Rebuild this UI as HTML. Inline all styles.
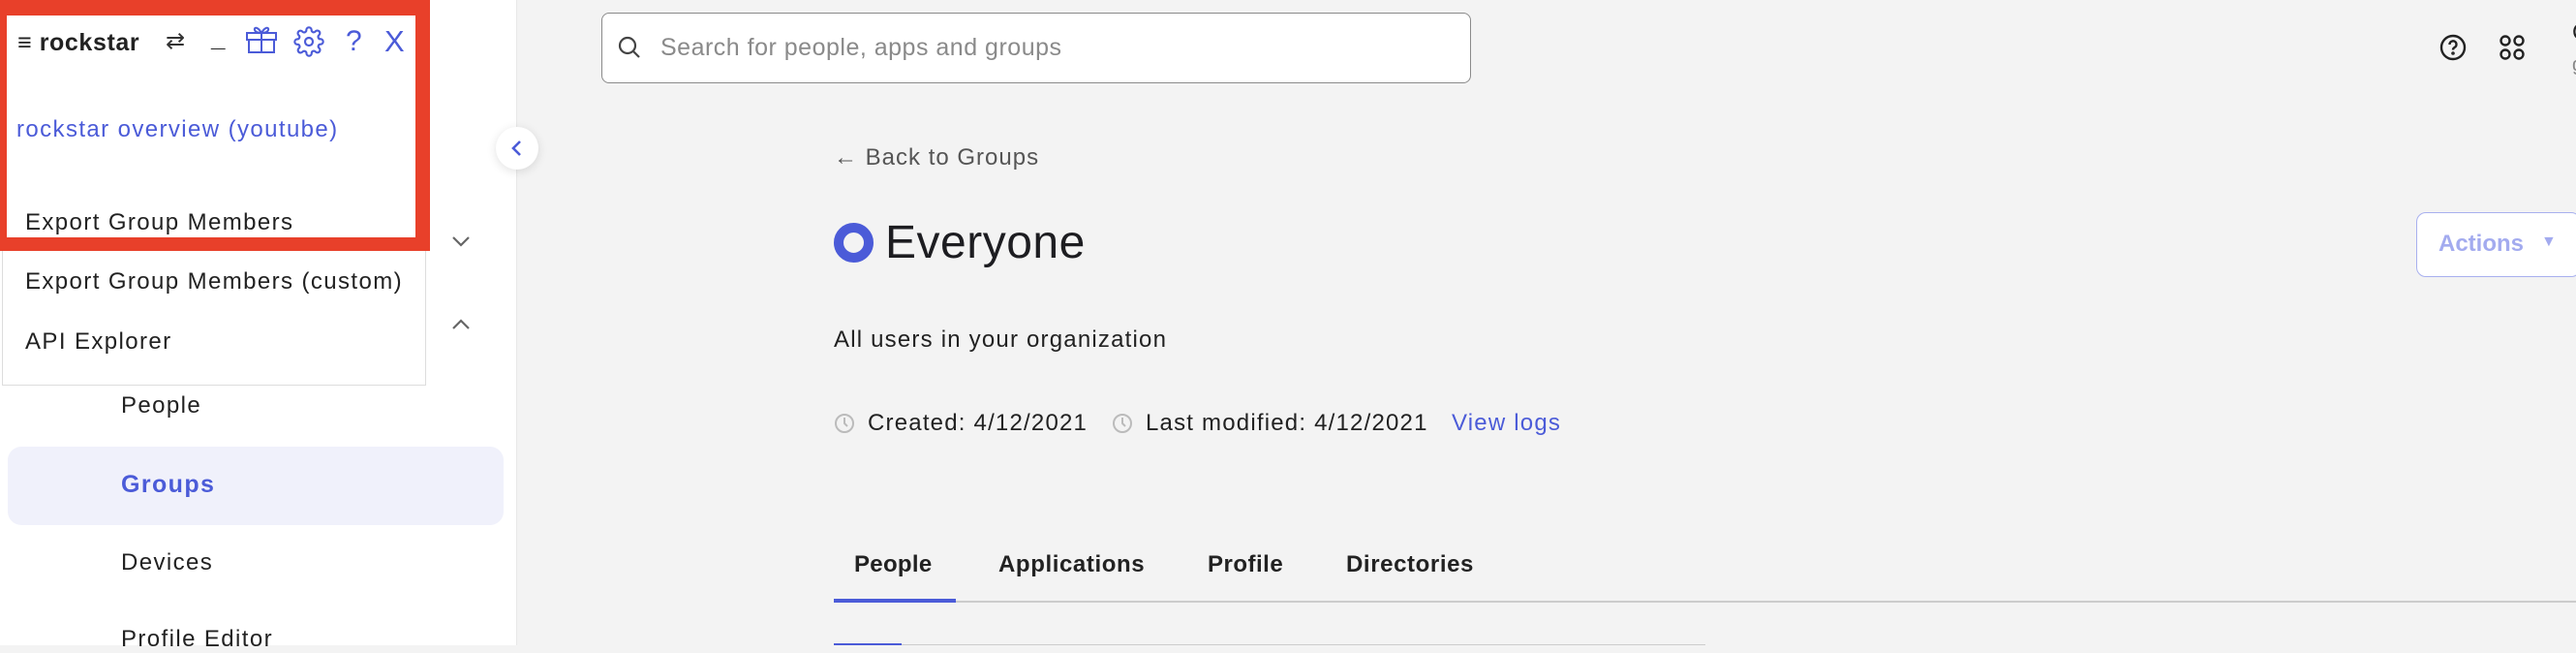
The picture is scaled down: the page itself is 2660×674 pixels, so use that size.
<!DOCTYPE html>
<html><head><meta charset="utf-8"><style>
*{margin:0;padding:0;box-sizing:border-box}
body{width:2660px;height:666px;overflow:hidden;background:#f3f3f3;font-family:"Liberation Sans",sans-serif;position:relative;color:#1d1d21}
.a{position:absolute;white-space:nowrap}
.side{position:absolute;left:0;top:0;width:534px;height:666px;background:#fff;border-right:1px solid #e8e8e8}
.blue{color:#4b5bd8}
.s{letter-spacing:1.4px}
.m{letter-spacing:1.2px}
</style></head><body>
<div class="side"></div>
<div class="a" style="left:2px;top:250px;width:438px;height:148px;background:#fff;border:1px solid #ddd;border-top:none"></div>
<div class="a s" style="left:26px;top:277px;font-size:24px;color:#222">Export Group Members (custom)</div>
<div class="a s" style="left:26px;top:339px;font-size:24px;color:#222">API Explorer</div>
<div class="a" style="left:0;top:0;width:444px;height:259px;border-style:solid;border-color:#e8402a;border-width:16px 15px 14px 7px;background:#fff"></div>
<div class="a" style="left:18px;top:30px;font-size:25px;font-weight:bold;color:#222;letter-spacing:0.6px">≡ rockstar</div>
<div class="a" style="left:171px;top:28px;font-size:24px;color:#333">⇄</div>
<div class="a" style="left:218px;top:24px;font-size:26px;font-weight:bold;color:#222">_</div>
<svg class="a" style="left:253px;top:25px" width="34" height="30" viewBox="0 0 34 30" fill="none" stroke="#4b5bd8" stroke-width="2"><rect x="2" y="9" width="30" height="7"/><rect x="4" y="16" width="26" height="13"/><path d="M17 9V29M17 9C13 2 9 3 10 6s5 3 7 3C21 2 25 3 24 6s-5 3-7 3"/></svg>
<svg class="a" style="left:303px;top:27px" width="32" height="32" viewBox="0 0 24 24" fill="none" stroke="#4b5bd8" stroke-width="1.6"><circle cx="12" cy="12" r="3"/><path d="M19.4 15a1.7 1.7 0 0 0 .3 1.8l.1.1a2 2 0 1 1-2.8 2.8l-.1-.1a1.7 1.7 0 0 0-1.8-.3 1.7 1.7 0 0 0-1 1.5V21a2 2 0 1 1-4 0v-.1a1.7 1.7 0 0 0-1.100-1.5 1.7 1.7 0 0 0-1.8.3l-.1.1a2 2 0 1 1-2.8-2.8l.1-.1a1.7 1.7 0 0 0 .3-1.8 1.7 1.7 0 0 0-1.5-1H3a2 2 0 1 1 0-4h.1a1.7 1.7 0 0 0 1.5-1.1 1.7 1.7 0 0 0-.3-1.8l-.1-.1a2 2 0 1 1 2.8-2.8l.1.1a1.7 1.7 0 0 0 1.8.3H9a1.7 1.7 0 0 0 1-1.5V3a2 2 0 1 1 4 0v.1a1.7 1.7 0 0 0 1 1.5 1.7 1.7 0 0 0 1.8-.3l.1-.1a2 2 0 1 1 2.8 2.8l-.1.1a1.7 1.7 0 0 0-.3 1.8V9a1.7 1.7 0 0 0 1.5 1H21a2 2 0 1 1 0 4h-.1a1.7 1.7 0 0 0-1.5 1z"/></svg>
<div class="a blue" style="left:357px;top:26px;font-size:30px">?</div>
<div class="a blue" style="left:397px;top:25px;font-size:31px">X</div>
<div class="a blue s" style="left:17px;top:120px;font-size:24px">rockstar overview (youtube)</div>
<div class="a s" style="left:26px;top:216px;font-size:24px;color:#222">Export Group Members</div>
<svg class="a" style="left:466px;top:242px" width="20" height="14" viewBox="0 0 20 14" fill="none" stroke="#666" stroke-width="2.2"><path d="M2 3l8 8 8-8"/></svg>
<svg class="a" style="left:466px;top:328px" width="20" height="14" viewBox="0 0 20 14" fill="none" stroke="#666" stroke-width="2.2"><path d="M2 11l8-8 8 8"/></svg>
<div class="a s" style="left:125px;top:405px;font-size:24px;color:#222">People</div>
<div class="a" style="left:8px;top:461px;width:512px;height:81px;background:#f0f1fb;border-radius:14px"></div>
<div class="a blue s" style="left:125px;top:486px;font-size:25px;font-weight:bold">Groups</div>
<div class="a s" style="left:125px;top:567px;font-size:24px;color:#222">Devices</div>
<div class="a s" style="left:125px;top:646px;font-size:24px;color:#222">Profile Editor</div>
<div class="a" style="left:512px;top:131px;width:44px;height:44px;border-radius:50%;background:#fff;box-shadow:0 2px 10px rgba(0,0,0,.12)"></div>
<svg class="a" style="left:526px;top:143px" width="16" height="20" viewBox="0 0 16 20" fill="none" stroke="#4b5bd8" stroke-width="2.6"><path d="M11 3L4 10l7 7"/></svg>
<div class="a" style="left:621px;top:13px;width:898px;height:73px;background:#fff;border:1.5px solid #8a8a8a;border-radius:8px"></div>
<svg class="a" style="left:637px;top:36px" width="26" height="26" viewBox="0 0 26 26" fill="none" stroke="#444" stroke-width="2.2"><circle cx="11" cy="11" r="8"/><path d="M17 17l6 6"/></svg>
<div class="a" style="left:682px;top:35px;font-size:25px;color:#8a8a8a;letter-spacing:0.5px">Search for people, apps and groups</div>
<svg class="a" style="left:2519px;top:35px" width="28" height="28" viewBox="0 0 28 28" fill="none" stroke="#222" stroke-width="2.4"><circle cx="14" cy="14" r="12"/><path d="M10.5 11a3.5 3.5 0 1 1 5 3c-1 .6-1.5 1.2-1.5 2.5"/><circle cx="14" cy="20" r=".6" fill="#222"/></svg>
<svg class="a" style="left:2580px;top:35px" width="28" height="28" viewBox="0 0 28 28" fill="none" stroke="#222" stroke-width="2.4"><circle cx="7" cy="7" r="4.5"/><circle cx="21" cy="7" r="4.5"/><circle cx="7" cy="21" r="4.5"/><circle cx="21" cy="21" r="4.5"/></svg>
<div class="a" style="left:2656px;top:20px;font-size:24px;color:#222">C</div>
<div class="a" style="left:2656px;top:56px;font-size:20px;color:#888">g</div>
<div class="a" style="left:861px;top:149px;font-size:24px;color:#555;letter-spacing:1px">← Back to Groups</div>
<div class="a" style="left:861px;top:230px;width:41px;height:41px;border-radius:50%;border:10px solid #4b5bd8"></div>
<div class="a" style="left:914px;top:223px;font-size:48px;font-weight:500;color:#1d1d21;letter-spacing:0.5px">Everyone</div>
<div class="a m" style="left:861px;top:337px;font-size:24px;color:#222">All users in your organization</div>
<svg class="a" style="left:861px;top:425px" width="22" height="24" viewBox="0 0 22 24" fill="none" stroke="#bbb" stroke-width="2"><circle cx="11" cy="12" r="9"/><path d="M11 6v6l3 3"/></svg>
<div class="a m" style="left:896px;top:423px;font-size:24px;color:#222">Created: 4/12/2021</div>
<svg class="a" style="left:1148px;top:425px" width="22" height="24" viewBox="0 0 22 24" fill="none" stroke="#bbb" stroke-width="2"><circle cx="11" cy="12" r="9"/><path d="M11 6v6l3 3"/></svg>
<div class="a m" style="left:1183px;top:423px;font-size:24px;color:#222">Last modified: 4/12/2021</div>
<div class="a blue m" style="left:1499px;top:423px;font-size:24px">View logs</div>
<div class="a" style="left:882px;top:569px;font-size:24px;font-weight:bold;color:#222;letter-spacing:0.3px">People</div>
<div class="a" style="left:1031px;top:569px;font-size:24px;font-weight:bold;color:#222;letter-spacing:0.6px">Applications</div>
<div class="a" style="left:1247px;top:569px;font-size:24px;font-weight:bold;color:#222;letter-spacing:0.5px">Profile</div>
<div class="a" style="left:1390px;top:569px;font-size:24px;font-weight:bold;color:#222;letter-spacing:0.6px">Directories</div>
<div class="a" style="left:861px;top:620px;width:1799px;height:1.5px;background:#ccc"></div>
<div class="a" style="left:861px;top:618px;width:126px;height:4px;background:#4b5bd8"></div>
<div class="a" style="left:861px;top:664px;width:70px;height:2px;background:#4b5bd8"></div>
<div class="a" style="left:931px;top:665px;width:830px;height:1px;background:#ccc"></div>
<div class="a" style="left:2495px;top:219px;width:170px;height:67px;background:#fff;border:1.5px solid #a8b0ef;border-radius:10px"></div>
<div class="a" style="left:2518px;top:238px;font-size:24px;font-weight:bold;color:#a3abef">Actions</div>
<div class="a" style="left:2624px;top:241px;font-size:16px;color:#a3abef">▼</div>
</body></html>
